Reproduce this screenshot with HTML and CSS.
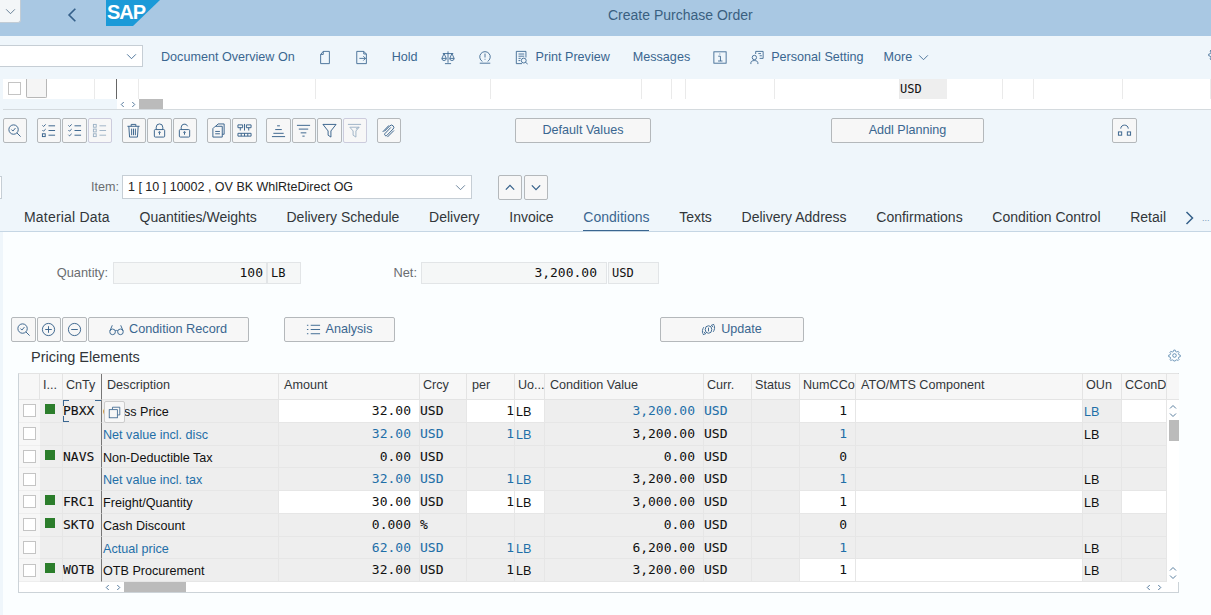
FILE: index.html
```html
<!DOCTYPE html>
<html>
	<head>
		<meta charset="UTF-8">
		<title>Create Purchase Order</title>
		<link rel="stylesheet" href="styles.css">
	</head>
	<body>
		<svg class="defs" width="0" height="0">
			<symbol id="i-search" viewBox="0 0 16 16"><circle cx="7" cy="7" r="5"/><path d="M10.6 10.6L14.5 14.5M4.8 7l1.5 1.6L9 5.4"/></symbol>
			<symbol id="i-checkall" viewBox="0 0 16 16"><path d="M1.5 2.5l1.2 1.2L5 1.5M1.5 7.5l1.2 1.2L5 6.5M8 3h7M8 8h7M8 13h7"/><rect x="1.5" y="11.5" width="3" height="3"/></symbol>
			<symbol id="i-checkall2" viewBox="0 0 16 16"><path d="M1.5 2.5l1.2 1.2L5 1.5M1.5 7.5l1.2 1.2L5 6.5M1.5 12.5l1.2 1.2L5 11.5M8 3h7M8 8h7M8 13h7"/></symbol>
			<symbol id="i-checknone" viewBox="0 0 16 16"><rect x="1.5" y="1.5" width="3" height="3"/><rect x="1.5" y="6.5" width="3" height="3"/><rect x="1.5" y="11.5" width="3" height="3"/><path d="M8 3h7M8 8h7M8 13h7"/></symbol>
			<symbol id="i-trash" viewBox="0 0 16 16"><path d="M1.5 3.5h13M5.5 3.5V1.5h5v2M3 3.5l.8 11.5h8.4L13 3.5M6 6v7M8 6v7M10 6v7"/></symbol>
			<symbol id="i-lock" viewBox="0 0 16 16"><rect x="2.5" y="7" width="11" height="8" rx="1"/><path d="M4.5 7V4.5a3.5 3.5 0 0 1 7 0V7M8 10v2.5"/><circle cx="8" cy="10" r=".8"/></symbol>
			<symbol id="i-unlock" viewBox="0 0 16 16"><rect x="2.5" y="7" width="11" height="8" rx="1"/><path d="M4.5 7V4.5a3.5 3.5 0 0 1 6.8-1M8 10v2.5"/><circle cx="8" cy="10" r=".8"/></symbol>
			<symbol id="i-copy" viewBox="0 0 16 16"><path d="M5 3.5L7.5 1h6.5v11h-2"/><path d="M2 6l2.5-2.5H12V15H2zM4.5 9h5M4.5 11.5h5"/></symbol>
			<symbol id="i-struct" viewBox="0 0 16 16"><path d="M1 2h5v3H1zM10 2h5v3h-5zM3.5 5v3M12.5 5v3M8 1v7M1 11h14v3H1zM4.5 11v3M8 11v3M11.5 11v3"/></symbol>
			<symbol id="i-sortup" viewBox="0 0 16 16"><path d="M6.5 3h3M4.5 7h7M2.5 11h11M1 14.5h14"/></symbol>
			<symbol id="i-sortdown" viewBox="0 0 16 16"><path d="M1 2.5h14M3 6.5h10M5 10.5h6M6.8 14h2.4"/></symbol>
			<symbol id="i-filter" viewBox="0 0 16 16"><path d="M1 1.5h14L9.5 8.5V15l-3-2V8.5z"/></symbol>
			<symbol id="i-filteroff" viewBox="0 0 16 16"><path d="M1 1.5h14M3 4.5h10L9.5 8.5V15l-3-2V8.5zM9.5 6.5l3-2"/></symbol>
			<symbol id="i-clip" viewBox="0 0 16 16"><path d="M3.5 9l6-6a2.4 2.4 0 0 1 3.4 3.4L6 13.5a1.5 1.5 0 0 1-2-2l6.5-6.8M1.8 9.5L8.5 2.5M6.8 15l7-7"/></symbol>
			<symbol id="i-doc" viewBox="0 0 16 16"><path d="M6 1h7v14H3V4.5zM6 1v3.5H3"/></symbol>
			<symbol id="i-docgo" viewBox="0 0 16 16"><path d="M2 1h8l3 3v11H2zM10 1v3h3M5 9h7M9.5 6.5L12 9l-2.5 2.5"/></symbol>
			<symbol id="i-scale" viewBox="0 0 16 16"><path d="M8 1v13M4.5 15h7M2 3.5h12M3.5 3.5L1 9h5zM12.5 3.5L10 9h5zM1 9a2.5 2.5 0 0 0 5 0M10 9a2.5 2.5 0 0 0 5 0"/></symbol>
			<symbol id="i-alert" viewBox="0 0 16 16"><path d="M2 14.5h12M5 12.5a6 6 0 1 1 6 0M8 3.5V8M8 9.5v1"/></symbol>
			<symbol id="i-print" viewBox="0 0 16 16"><path d="M8 15H1.5V1h11v7M4 4h6.5M4 6.5h6.5M4 9h2.5M4 11.5h2"/><circle cx="10" cy="11.5" r="2.8"/><path d="M12 13.5l2.5 2"/></symbol>
			<symbol id="i-info" viewBox="0 0 16 16"><rect x="1" y="1.5" width="14" height="13"/><path d="M6 6.5h2.5V12M5.8 12h5M7.8 3.5v1"/></symbol>
			<symbol id="i-person" viewBox="0 0 16 16"><circle cx="5" cy="8" r="2.5"/><path d="M1 15.5V14c0-1.5 1.5-2.5 4-2.5s4 1 4 2.5v1.5M6.500 4V1H15v8h-4M9.5 3.5h3M11 6h2.5"/></symbol>
			<symbol id="i-glasses" viewBox="0 0 16 16"><circle cx="3.8" cy="10.5" r="3"/><circle cx="12.2" cy="10.5" r="3"/><path d="M6.5 9.5c1-.7 2-.7 3 0M1 9.5L3.500 3.5M15 9.5L12.5 3.5"/></symbol>
			<symbol id="i-list" viewBox="0 0 16 16"><path d="M5 3.5h10M5 8h10M5 12.5h10M1 3.5h1.5M1 8h1.5M1 12.5h1.5"/></symbol>
			<symbol id="i-update" viewBox="0 0 16 16"><ellipse cx="8" cy="8" rx="3.5" ry="4"/><path d="M14 2.5l-3 1 2 2M14 3.5c1 2 .5 5-1 7M2 13.5l3-1-2-2M2 12.5c-1-2-.5-5 1-7M8 6v4"/></symbol>
			<symbol id="i-gear" viewBox="0 0 16 16"><circle cx="8" cy="8" r="2.2"/><path d="M7 1h2l.5 2 1.7.7L13 2.7 14.3 4l-1 1.8.7 1.7 2 .5v2l-2 .5-.7 1.7 1 1.8L13 15.3l-1.8-1-1.7.7-.5 1H7l-.5-1-1.700-.7-1.800 1L1.700 14l1-1.800L2 10.500 0 10V8l2-.5.7-1.700-1-1.800L3 2.700l1.800 1L6.500 3z" transform="translate(.8 .4) scale(.9)"/></symbol>
			<symbol id="i-layout" viewBox="0 0 16 16"><path d="M4 6c0-5 8-5 8 0"/><rect x="1.5" y="9.5" width="3.5" height="3.5"/><rect x="11" y="9.5" width="3.5" height="3.5"/></symbol>
			<symbol id="i-copy2" viewBox="0 0 16 16"><path d="M5.5 4V1.5h9V11H12"/><rect x="1.5" y="4.5" width="10" height="10"/></symbol>
		</svg>

		<div class="shellbar">
			<span class="shell-drop"><svg class="ico-s" viewBox="0 0 12 8"><path d="M1 1.5l5 5 5-5"/></svg></span>
			<svg class="back" viewBox="0 0 12 18"><path d="M10 1.5L2.5 9l7.5 7.5"/></svg>
			<div class="sap-logo">SAP</div>
			<div class="title">Create Purchase Order</div>
		</div>

		<div class="toolbar">
			<span class="tb-select"><svg class="ico-s" viewBox="0 0 12 8"><path d="M1 1.5l5 5 5-5"/></svg></span>
			<span>Document Overview On</span>
			<svg class="ico"><use href="#i-doc"/></svg>
			<svg class="ico"><use href="#i-docgo"/></svg>
			<span>Hold</span>
			<svg class="ico"><use href="#i-scale"/></svg>
			<svg class="ico"><use href="#i-alert"/></svg>
			<span class="tb-pair"><svg class="ico"><use href="#i-print"/></svg>Print Preview</span>
			<span>Messages</span>
			<svg class="ico"><use href="#i-info"/></svg>
			<span class="tb-pair"><svg class="ico"><use href="#i-person"/></svg>Personal Setting</span>
			<span class="tb-pair tb-more">More<svg class="ico-s" viewBox="0 0 12 8"><path d="M1 1.5l5 5 5-5"/></svg></span>
			<svg class="ico tb-gear"><use href="#i-gear"/></svg>
		</div>

		<div class="overview">
			<div class="ov-row">
				<div class="ov-c" style="width:92px"><i class="chk"></i><i class="ov-btn"></i></div>
				<div class="ov-c ov-fix" style="width:22px"></div>
				<div class="ov-c" style="width:22px"></div>
				<div class="ov-c" style="width:177px"></div>
				<div class="ov-c" style="width:175px"></div>
				<div class="ov-c" style="width:151px"></div>
				<div class="ov-c" style="width:30px"></div>
				<div class="ov-c" style="width:14px"></div>
				<div class="ov-c" style="width:89px"></div>
				<div class="ov-c" style="width:125px"></div>
				<div class="ov-c ov-usd" style="width:47px">USD</div>
				<div class="ov-c" style="width:56px"></div>
				<div class="ov-c" style="width:31px"></div>
				<div class="ov-c" style="width:89px"></div>
				<div class="ov-c" style="width:88px"></div>
			</div>
			<div class="ov-scroll">
				<div class="sc-left"></div>
				<div class="sc-arrows"><svg viewBox="0 0 6 8"><path d="M4.5 1L1.5 4l3 3"/></svg><svg viewBox="0 0 6 8"><path d="M1.5 1l3 3-3 3"/></svg></div>
				<div class="sc-thumb"></div>
			</div>
		</div>

		<div class="actions">
			<button class="ib"><svg class="ico"><use href="#i-search"/></svg></button>
			<div class="grp">
				<button class="ib"><svg class="ico"><use href="#i-checkall"/></svg></button>
				<button class="ib"><svg class="ico"><use href="#i-checkall2"/></svg></button>
				<button class="ib off"><svg class="ico"><use href="#i-checknone"/></svg></button>
			</div>
			<div class="grp">
				<button class="ib"><svg class="ico"><use href="#i-trash"/></svg></button>
				<button class="ib"><svg class="ico"><use href="#i-lock"/></svg></button>
				<button class="ib"><svg class="ico"><use href="#i-unlock"/></svg></button>
			</div>
			<div class="grp">
				<button class="ib"><svg class="ico"><use href="#i-copy"/></svg></button>
				<button class="ib"><svg class="ico"><use href="#i-struct"/></svg></button>
			</div>
			<div class="grp">
				<button class="ib"><svg class="ico"><use href="#i-sortup"/></svg></button>
				<button class="ib"><svg class="ico"><use href="#i-sortdown"/></svg></button>
				<button class="ib"><svg class="ico"><use href="#i-filter"/></svg></button>
				<button class="ib off"><svg class="ico"><use href="#i-filteroff"/></svg></button>
			</div>
			<button class="ib"><svg class="ico"><use href="#i-clip"/></svg></button>
			<button class="btn btn-default">Default Values</button>
			<button class="btn btn-addl">Addl Planning</button>
			<button class="ib btn-layout"><svg class="ico"><use href="#i-layout"/></svg></button>
		</div>

		<div class="item-row">
			<span class="cut-box"></span>
			<label class="lbl item-lbl">Item:</label>
			<div class="item-input">1 [ 10 ] 10002 , OV BK WhlRteDirect OG<svg class="ico-s" viewBox="0 0 12 8"><path d="M1 1.5l5 5 5-5"/></svg></div>
			<button class="ib item-up"><svg class="ico-s" viewBox="0 0 12 8"><path d="M1 6.5l5-5 5 5"/></svg></button>
			<button class="ib item-down"><svg class="ico-s" viewBox="0 0 12 8"><path d="M1 1.5l5 5 5-5"/></svg></button>
		</div>

		<div class="tabs">
			<span>Material Data</span>
			<span>Quantities/Weights</span>
			<span>Delivery Schedule</span>
			<span>Delivery</span>
			<span>Invoice</span>
			<span class="active">Conditions</span>
			<span>Texts</span>
			<span>Delivery Address</span>
			<span>Confirmations</span>
			<span>Condition Control</span>
			<span>Retail</span>
			<div class="tabs-more"><svg viewBox="0 0 9 14"><path d="M1.5 1l6 6-6 6"/></svg><em>...</em></div>
		</div>

		<div class="panel">
			<div class="qty-row">
				<label class="lbl qty-lbl">Quantity:</label>
				<div class="ro ro-qty">100</div>
				<div class="ro ro-unit">LB</div>
				<label class="lbl net-lbl">Net:</label>
				<div class="ro ro-net">3,200.00</div>
				<div class="ro ro-cur">USD</div>
			</div>

			<div class="cond-btns">
				<button class="ib"><svg class="ico"><use href="#i-search"/></svg></button>
				<button class="ib"><svg class="ico" viewBox="0 0 16 16"><circle cx="8" cy="8" r="6.5"/><path d="M4.5 8h7M8 4.5v7"/></svg></button>
				<button class="ib"><svg class="ico" viewBox="0 0 16 16"><circle cx="8" cy="8" r="6.5"/><path d="M4.5 8h7"/></svg></button>
				<button class="btn btn-rec"><svg class="ico"><use href="#i-glasses"/></svg>Condition Record</button>
				<button class="btn btn-ana"><svg class="ico"><use href="#i-list"/></svg>Analysis</button>
				<button class="btn btn-upd"><svg class="ico"><use href="#i-update"/></svg>Update</button>
			</div>

			<div class="sec-head">
				<span>Pricing Elements</span>
				<svg class="ico"><use href="#i-gear"/></svg>
			</div>

			<div class="tbl">
				<div class="tbl-top">
					<div class="grid">
						<div class="h"></div><div class="h">I...</div><div class="h fix">CnTy</div><div class="h pl">Description</div><div class="h pl">Amount</div><div class="h">Crcy</div><div class="h pl">per</div><div class="h">Uo...</div><div class="h pl">Condition Value</div><div class="h">Curr.</div><div class="h">Status</div><div class="h">NumCCo</div><div class="h pl">ATO/MTS Component</div><div class="h">OUn</div><div class="h">CConDe</div>

						<div class="s"><i class="chk"></i></div><div class="c"><i class="led"></i></div><div class="c m fix focus">PBXX</div><div class="c">Gross Price</div><div class="c n w">32.00</div><div class="c m">USD</div><div class="c n w">1</div><div class="c w">LB</div><div class="c n b">3,200.00</div><div class="c m b">USD</div><div class="c"></div><div class="c n w">1</div><div class="c w"></div><div class="c b">LB</div><div class="c w"></div>

						<div class="s"><i class="chk"></i></div><div class="c"></div><div class="c m fix"></div><div class="c b">Net value incl. disc</div><div class="c n b">32.00</div><div class="c m b">USD</div><div class="c n b">1</div><div class="c b">LB</div><div class="c n">3,200.00</div><div class="c m">USD</div><div class="c"></div><div class="c n b">1</div><div class="c"></div><div class="c">LB</div><div class="c"></div>

						<div class="s"><i class="chk"></i></div><div class="c"><i class="led"></i></div><div class="c m fix">NAVS</div><div class="c">Non-Deductible Tax</div><div class="c n">0.00</div><div class="c m">USD</div><div class="c"></div><div class="c"></div><div class="c n">0.00</div><div class="c m">USD</div><div class="c"></div><div class="c n">0</div><div class="c"></div><div class="c"></div><div class="c"></div>

						<div class="s"><i class="chk"></i></div><div class="c"></div><div class="c m fix"></div><div class="c b">Net value incl. tax</div><div class="c n b">32.00</div><div class="c m b">USD</div><div class="c n b">1</div><div class="c b">LB</div><div class="c n">3,200.00</div><div class="c m">USD</div><div class="c"></div><div class="c n b">1</div><div class="c"></div><div class="c">LB</div><div class="c"></div>

						<div class="s"><i class="chk"></i></div><div class="c"><i class="led"></i></div><div class="c m fix">FRC1</div><div class="c">Freight/Quantity</div><div class="c n w">30.00</div><div class="c m">USD</div><div class="c n w">1</div><div class="c w">LB</div><div class="c n">3,000.00</div><div class="c m">USD</div><div class="c"></div><div class="c n w">1</div><div class="c w"></div><div class="c">LB</div><div class="c w"></div>

						<div class="s"><i class="chk"></i></div><div class="c"><i class="led"></i></div><div class="c m fix">SKTO</div><div class="c">Cash Discount</div><div class="c n">0.000</div><div class="c m">%</div><div class="c"></div><div class="c"></div><div class="c n">0.00</div><div class="c m">USD</div><div class="c"></div><div class="c n">0</div><div class="c"></div><div class="c"></div><div class="c"></div>

						<div class="s"><i class="chk"></i></div><div class="c"></div><div class="c m fix"></div><div class="c b">Actual price</div><div class="c n b">62.00</div><div class="c m b">USD</div><div class="c n b">1</div><div class="c b">LB</div><div class="c n">6,200.00</div><div class="c m">USD</div><div class="c"></div><div class="c n b">1</div><div class="c"></div><div class="c">LB</div><div class="c"></div>

						<div class="s"><i class="chk"></i></div><div class="c"><i class="led"></i></div><div class="c m fix">WOTB</div><div class="c">OTB Procurement</div><div class="c n">32.00</div><div class="c m">USD</div><div class="c n">1</div><div class="c">LB</div><div class="c n">3,200.00</div><div class="c m">USD</div><div class="c"></div><div class="c n w">1</div><div class="c w"></div><div class="c">LB</div><div class="c"></div>
					</div>
					<div class="vscroll">
						<div class="vs-head"></div>
						<svg class="vs-arrow" viewBox="0 0 8 6"><path d="M1 4.5l3-3 3 3"/></svg>
						<svg class="vs-arrow" viewBox="0 0 8 6"><path d="M1 1.5l3 3 3-3"/></svg>
						<div class="vs-thumb"></div>
						<div class="vs-fill"></div>
						<svg class="vs-arrow" viewBox="0 0 8 6"><path d="M1 4.5l3-3 3 3"/></svg>
						<svg class="vs-arrow" viewBox="0 0 8 6"><path d="M1 1.5l3 3 3-3"/></svg>
					</div>
					<button class="cell-copy"><svg class="ico"><use href="#i-copy2"/></svg></button>
				</div>
				<div class="tbl-scroll">
					<div class="sc-arrows"><svg viewBox="0 0 6 8"><path d="M4.5 1L1.5 4l3 3"/></svg><svg viewBox="0 0 6 8"><path d="M1.5 1l3 3-3 3"/></svg></div>
					<div class="sc-thumb"></div>
					<div class="sc-arrows sc-right"><svg viewBox="0 0 6 8"><path d="M4.5 1L1.5 4l3 3"/></svg><svg viewBox="0 0 6 8"><path d="M1.5 1l3 3-3 3"/></svg></div>
				</div>
			</div>
		</div>
	</body>
</html>
```

FILE: styles.css
```css
*{
	margin: 0;
	padding: 0;
	box-sizing: border-box;
}
html, body{
	width: 1211px;
	height: 615px;
	overflow: hidden;
}
body{
	background: #eff6fb;
	font-family: "Liberation Sans", Arial, sans-serif;
	font-size: 12.6px;
	color: #32363a;
}
.defs{
	position: absolute;
}
svg{
	fill: none;
	stroke: currentColor;
	stroke-width: 1;
	flex: none;
}
.ico{
	width: 15px;
	height: 15px;
}
.ico-s{
	width: 11px;
	height: 7px;
}
button{
	font: inherit;
	color: #3a6690;
}

/* shell bar */
.shellbar{
	height: 36px;
	background: #a9c8e3;
	display: flex;
	align-items: flex-start;
	position: relative;
	color: #3a5f80;
}
.shell-drop{
	width: 21px;
	height: 23px;
	background: #f3f6f8;
	border: 1px solid #c2ccd5;
	border-left: 0;
	border-top: 0;
	border-radius: 0 0 3px 0;
	display: flex;
	align-items: center;
	justify-content: center;
	color: #56718a;
}
.back{
	width: 10px;
	height: 16px;
	margin: 7px 0 0 46px;
	stroke: #35608a;
	stroke-width: 2;
}
.sap-logo{
	width: 54px;
	height: 26px;
	margin-left: 29px;
	background: #1b9ad8;
	clip-path: polygon(0 0, 100% 0, 50% 100%, 0 100%);
	color: #fff;
	font-size: 20px;
	font-weight: bold;
	line-height: 25px;
	letter-spacing: -1px;
	padding-left: 1px;
}
.title{
	position: absolute;
	left: 608px;
	top: 7px;
	font-size: 14px;
	line-height: 16px;
}

/* toolbar */
.toolbar{
	height: 43px;
	display: flex;
	align-items: flex-start;
	gap: 23px;
	padding-top: 9px;
	color: #3a6690;
	line-height: 25px;
	position: relative;
	overflow: hidden;
}
.tb-select{
	width: 143px;
	height: 22px;
	margin-right: -5px;
	background: #fff;
	border: 1px solid #c6ced5;
	border-left: 0;
	display: flex;
	align-items: center;
	justify-content: flex-end;
	padding-right: 5px;
}
.toolbar .ico{
	width: 14px;
	height: 15px;
}
.toolbar > .ico{
	margin-top: 5px;
}
.tb-pair{
	display: flex;
	align-items: center;
	gap: 7px;
}
.tb-more{
	margin-left: -3px;
	gap: 6px;
}
.toolbar .tb-gear{
	position: absolute;
	right: -11px;
	top: 6px;
}

/* overview table, cut off */
.overview{
	height: 31px;
	margin-left: 3px;
	background: #fff;
	border-bottom: 1px solid #d4dade;
}
.ov-row{
	height: 20px;
	display: flex;
}
.ov-c{
	border-right: 1px solid #eaeaea;
	display: flex;
	align-items: center;
	font-family: "DejaVu Sans Mono", monospace;
	font-size: 12px;
	color: #111;
}
.ov-c:first-child{
	padding-left: 5px;
	gap: 5px;
	align-items: flex-start;
}
.ov-c .chk{
	margin-top: 3px;
}
.ov-fix{
	border-right-color: #666;
}
.ov-btn{
	width: 21px;
	height: 19px;
	background: #f5f5f5;
	border: 1px solid #b7b7b7;
	border-top: 0;
	border-radius: 0 0 2px 2px;
}
.ov-usd{
	background: #eee;
	border-right: 0;
}
.ov-scroll{
	height: 10px;
	display: flex;
	align-items: stretch;
}
.sc-left{
	width: 114px;
	background: #eff6fb;
}
.sc-arrows{
	width: 22px;
	display: flex;
	align-items: center;
	justify-content: center;
	gap: 6px;
	color: #35608a;
}
.sc-arrows svg{
	width: 5px;
	height: 7px;
}
.sc-thumb{
	width: 24px;
	background: #bbb;
}

/* buttons */
.ib{
	width: 24.5px;
	height: 25px;
	background: #f7f7f7;
	border: 1px solid #b4b8bb;
	border-radius: 2px;
	display: flex;
	align-items: center;
	justify-content: center;
	color: #35608a;
}
.ib.off{
	color: #9db2c5;
	border-color: #ccd;
}
.btn{
	height: 25px;
	background: #f7f7f7;
	border: 1px solid #b4b8bb;
	border-radius: 2px;
	display: flex;
	align-items: center;
	justify-content: center;
	gap: 5px;
	padding-bottom: 2px;
}
.btn svg{
	margin-top: 2px;
}
.actions{
	height: 25px;
	margin-top: 8px;
	padding-left: 2.5px;
	display: flex;
	gap: 9.5px;
}
.grp{
	display: flex;
	gap: 1px;
}
.btn-default{
	width: 136px;
	margin-left: 104.5px;
}
.btn-addl{
	width: 153px;
	margin-left: 170.5px;
}
.btn-layout{
	width: 25px;
	margin-left: 118.5px;
}

/* item selector */
.item-row{
	height: 25px;
	margin-top: 32px;
	display: flex;
	align-items: flex-start;
}
.lbl{
	color: #6a6d70;
	line-height: 22px;
}
.cut-box{
	width: 2px;
	height: 23px;
	margin-top: 1px;
	background: #fff;
	border: 1px solid #c6ced5;
	border-left: 0;
}
.item-lbl{
	margin-left: 89px;
	margin-top: 1px;
	width: 31px;
}
.item-input{
	width: 350px;
	height: 24px;
	background: #fff;
	border: 1px solid #c6ced5;
	padding: 0 5px;
	font-size: 12.5px;
	line-height: 22px;
	color: #222;
	display: flex;
	align-items: center;
	justify-content: space-between;
}
.item-input svg{
	color: #5a7690;
}
.item-up{
	margin-left: 26px;
	width: 24px;
}
.item-down{
	margin-left: 2px;
	width: 24px;
}
.item-up svg, .item-down svg{
	width: 10px;
	stroke-width: 1.5;
}

/* tabs */
.tabs{
	height: 32px;
	padding-left: 24px;
	display: flex;
	gap: 29.7px;
	border-bottom: 1px solid #c5d6e4;
	font-size: 14px;
	line-height: 34px;
	white-space: nowrap;
	position: relative;
	overflow: hidden;
}
.tabs span:first-child{
	letter-spacing: .2px;
}
.tabs .active{
	color: #3a6690;
	border-bottom: 2px solid #3a6690;
	height: 32px;
}
.tabs-more{
	position: absolute;
	left: 1185px;
	top: 11px;
	width: 26px;
	height: 20px;
	display: flex;
	gap: 8px;
	color: #35608a;
	background: #eff6fb;
	line-height: 14px;
}
.tabs-more svg{
	width: 9px;
	height: 14px;
	stroke-width: 1.5;
}
.tabs-more em{
	font-style: normal;
	font-size: 9px;
	color: #7a9ab8;
}

/* conditions panel */
.panel{
	height: 383px;
	margin-left: 3px;
	background: #fbfeff;
	padding-top: 30px;
}
.qty-row{
	height: 22px;
	display: flex;
}
.qty-lbl{
	width: 105px;
	text-align: right;
	font-size: 12.8px;
}
.ro{
	height: 22px;
	background: #f5f7f7;
	border: 1px solid #e2e5e7;
	font-family: "DejaVu Sans Mono", monospace;
	font-size: 13px;
	line-height: 20px;
	color: #111;
}
.ro-qty{
	width: 154px;
	margin-left: 5px;
	text-align: right;
	padding-right: 3px;
}
.ro-unit{
	width: 34px;
	padding-left: 3px;
	font-size: 12px;
}
.net-lbl{
	width: 116px;
	text-align: right;
	font-size: 12.8px;
}
.ro-net{
	width: 186px;
	margin-left: 4px;
	text-align: right;
	padding-right: 9px;
}
.ro-cur{
	width: 51px;
	margin-left: 1px;
	padding-left: 3px;
	font-size: 12px;
}
.cond-btns{
	height: 25px;
	margin-top: 33px;
	padding-left: 8px;
	display: flex;
	gap: 1px;
}
.btn-rec{
	width: 161px;
	font-size: 12.7px;
}
.btn-ana{
	width: 111px;
	margin-left: 34px;
}
.btn-upd{
	width: 144px;
	margin-left: 264px;
}
.sec-head{
	height: 31px;
	padding: 7px 0 0 28px;
	display: flex;
	justify-content: space-between;
	font-size: 14.5px;
	line-height: 16px;
	color: #32363a;
}
.sec-head svg{
	margin-right: 30px;
	color: #4a7ba6;
	width: 13px;
	height: 13px;
}

/* pricing table */
.tbl{
	width: 1161px;
	height: 220px;
	margin-left: 15px;
	background: #fff;
	border-right: 1px solid #ccd3d8;
	border-bottom: 2px solid #ccd3d8;
	border-left: 1px solid #ccd3d8;
	border-top: 1px solid #e3e3e3;
}
.tbl-top{
	display: flex;
	height: 208px;
	position: relative;
}
.grid{
	display: grid;
	grid-template-columns: 21px 23px 39px 177px 141px 47px 48px 30px 159px 48px 48px 56px 227px 39px 45px;
	grid-template-rows: 26px repeat(8, 22.75px);
	flex: none;
}
.h{
	background: #f7f7f7;
	border-right: 1px solid #e4e4e4;
	border-bottom: 1px solid #e4e4e4;
	padding: 0 0 0 3px;
	line-height: 23px;
	overflow: hidden;
	white-space: nowrap;
	color: #32363a;
}
.pl{
	padding-left: 5px;
}
.s{
	background: #f7f7f7;
	border-bottom: 1px solid #eee;
	display: flex;
	align-items: center;
	justify-content: center;
}
.chk{
	display: block;
	width: 13px;
	height: 13px;
	background: #fff;
	border: 1px solid #c4c4c4;
	flex: none;
}
.c{
	background: #eeeeee;
	border-right: 1px solid #e6e6e6;
	border-bottom: 1px solid #e6e6e6;
	line-height: 24px;
	padding-left: 1px;
	overflow: hidden;
	white-space: nowrap;
	color: #111;
}
.c.w{
	background: #fff;
}
.c.b{
	color: #1f6fa8;
}
.c.m, .c.n{
	font-family: "DejaVu Sans Mono", monospace;
	font-size: 13px;
	line-height: 22px;
}
.c.m{
	-webkit-text-stroke: .1px;
	padding-left: 0;
}
.c.n{
	text-align: right;
	padding-right: 8px;
}
.c:nth-child(15n+7).n{
	padding-right: 0;
}
.fix{
	border-right: 1px solid #777;
}
.led{
	display: block;
	width: 10px;
	height: 10px;
	margin: 4px 0 0 4px;
	background: #2b7d2b;
}
.focus{
	position: relative;
	overflow: visible;
	background: linear-gradient(#3a6690, #3a6690) 0 0 / 6px 1px no-repeat,
		linear-gradient(#3a6690, #3a6690) 0 0 / 1px 6px no-repeat,
		linear-gradient(#3a6690, #3a6690) 100% 0 / 6px 1px no-repeat,
		linear-gradient(#3a6690, #3a6690) 0 100% / 6px 1px no-repeat,
		linear-gradient(#3a6690, #3a6690) 0 100% / 1px 6px no-repeat,
		#eeeeee;
}
.cell-copy{
	position: absolute;
	left: 85px;
	top: 27px;
	width: 21px;
	height: 22px;
	background: #f7f7f7;
	border: 1px solid #ccc;
	border-radius: 2px;
	display: flex;
	align-items: center;
	justify-content: center;
	color: #35608a;
}
.cell-copy svg{
	width: 13px;
	height: 13px;
}
.vscroll{
	width: 12px;
	display: flex;
	flex-direction: column;
	align-items: center;
	color: #5a7f9f;
	background: #fff;
}
.vs-head{
	height: 26px;
	width: 100%;
	background: #f7f7f7;
	border-bottom: 1px solid #e4e4e4;
	margin-bottom: 4px;
}
.vs-arrow{
	width: 8px;
	height: 6px;
	margin-bottom: 2px;
}
.vs-thumb{
	width: 10px;
	height: 21px;
	background: #bbb;
	margin-left: 2px;
}
.vs-fill{
	flex: 1;
}
.tbl-scroll{
	height: 10px;
	display: flex;
	padding-left: 83px;
	background: #fff;
	position: relative;
}
.tbl-scroll .sc-thumb{
	width: 62px;
}
.sc-right{
	margin-left: auto;
	margin-right: 13px;
}
```
